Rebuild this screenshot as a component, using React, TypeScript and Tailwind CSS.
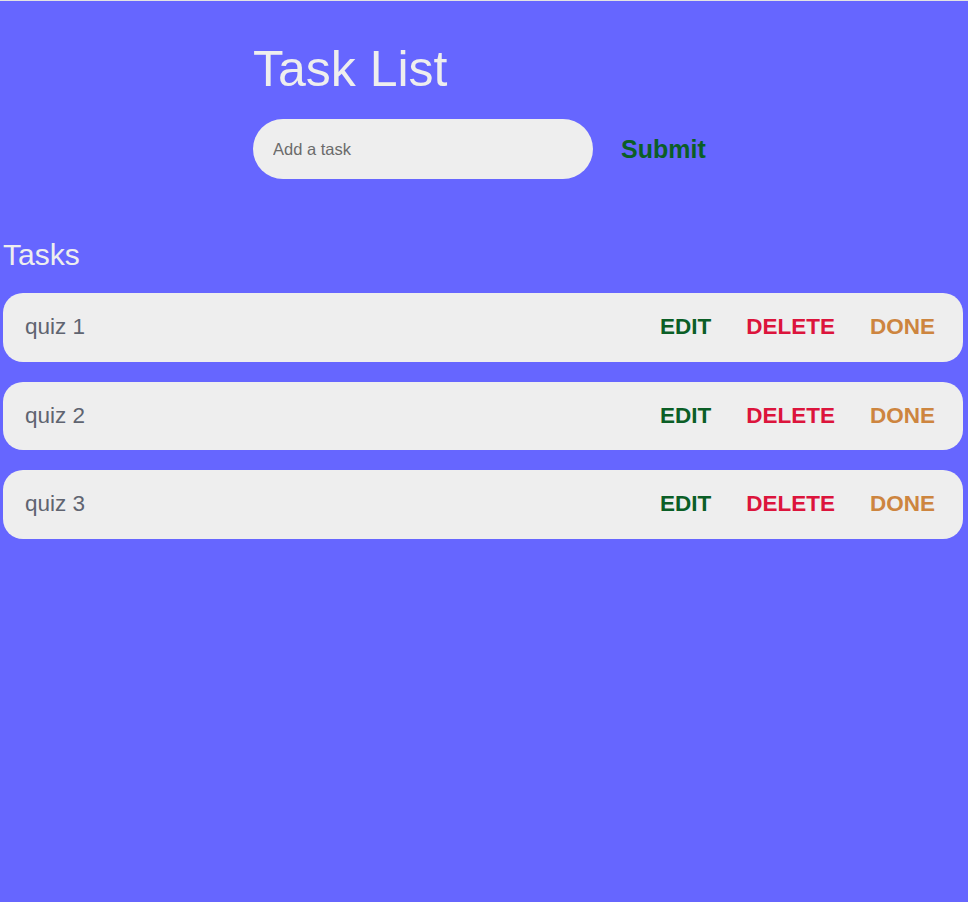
import React, { useState } from 'react';

interface Task {
  id: number;
  title: string;
}

const TaskRow: React.FC<{ task: Task }> = ({ task }) => {
  return (
    <div className="flex items-center justify-between h-[68.5px] ml-[3px] mr-[5px] pl-[22px] pr-[28px] bg-[#eeeeee] rounded-[20px]">
      <span className="text-[22.5px] text-[#5f6470]">{task.title}</span>
      <div className="flex items-center gap-[35px] text-[22.5px] font-bold">
        <button className="text-[#0b5e26]">EDIT</button>
        <button className="text-[#dc143c]">DELETE</button>
        <button className="text-[#cd853f]">DONE</button>
      </div>
    </div>
  );
};

export default function App() {
  const [tasks] = useState<Task[]>([
    { id: 1, title: 'quiz 1' },
    { id: 2, title: 'quiz 2' },
    { id: 3, title: 'quiz 3' },
  ]);

  return (
    <div className="min-h-[902px] bg-[#6666ff] border-t border-[#e3e3e3] font-['Liberation_Sans',Arial,sans-serif] text-[#eeeeee]">
      <div className="pl-[253px] pt-[40px]">
        <h1 className="text-[50px] leading-[57px]">Task List</h1>
        <form className="flex items-center mt-[21px]" onSubmit={(e) => e.preventDefault()}>
          <input
            type="text"
            placeholder="Add a task"
            className="w-[340px] h-[60px] rounded-full bg-[#eeeeee] px-5 text-[16.5px] text-[#333] placeholder:text-[#6b6b6b] outline-none"
          />
          <button type="submit" className="ml-[28px] mt-[2px] text-[25px] font-bold text-[#0b5e26]">Submit</button>
        </form>
      </div>
      <h2 className="mt-[58.5px] pl-[3px] text-[30px] leading-[34px]">Tasks</h2>
      <div className="mt-[21.5px] flex flex-col gap-[20px]">
        {tasks.map((t) => (
          <TaskRow key={t.id} task={t} />
        ))}
      </div>
    </div>
  );
}
